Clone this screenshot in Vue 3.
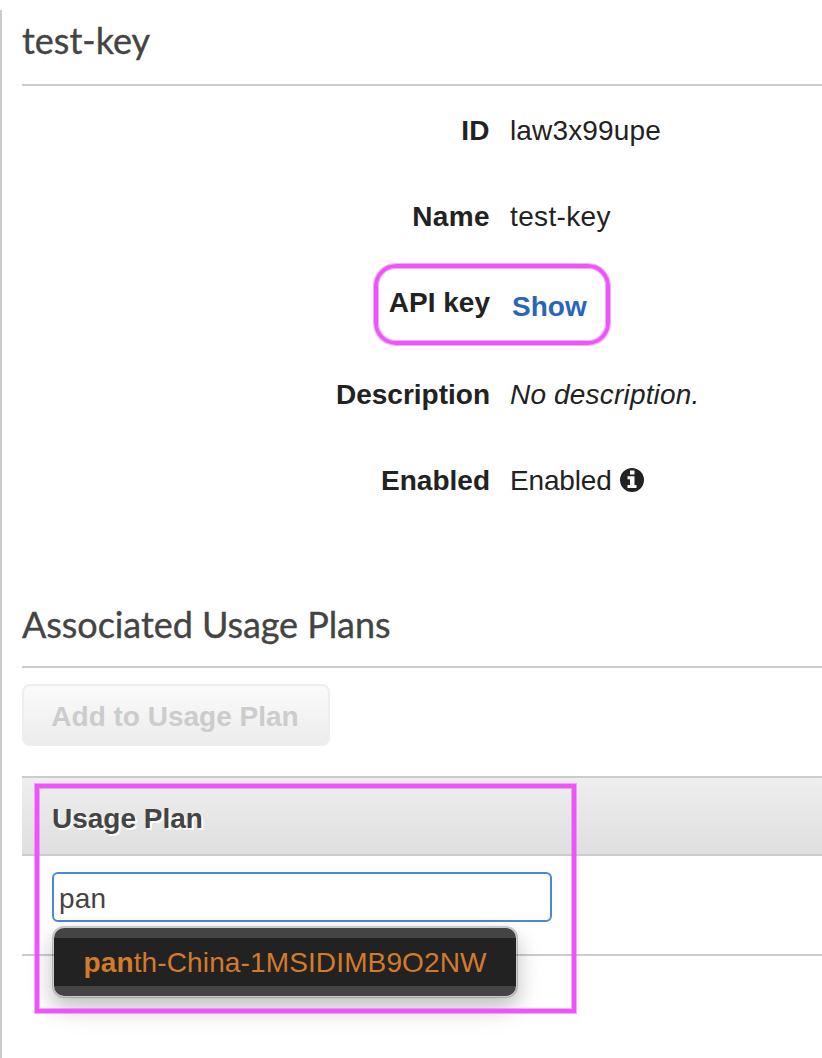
<script setup>
import { ref } from 'vue'

const details = [
  { label: 'ID', value: 'law3x99upe', kind: 'id' },
  { label: 'Name', value: 'test-key', kind: 'name' },
  { label: 'API key', value: 'Show', kind: 'secret' },
  { label: 'Description', value: 'No description.', kind: 'description' },
  { label: 'Enabled', value: 'Enabled', kind: 'enabled' },
]
const query = ref('pan')
</script>

<template>
  <main class="panel">
    <h1 class="title">test-key</h1>

    <dl class="details">
      <div v-for="row in details" :key="row.kind" class="row" :class="row.kind">
        <dt><span>{{ row.label }}</span></dt>
        <dd>
          <a v-if="row.kind === 'secret'"><span>{{ row.value }}</span></a>
          <span v-else>{{ row.value }}</span>
          <svg v-if="row.kind === 'enabled'" class="info" viewBox="0 0 24 24" width="24" height="24">
            <circle cx="12" cy="12" r="12" fill="#222" />
            <path d="M10 2.500h4.500v4H10zM7.500 8.200h7V17H16.500v3h-9v-3h2.500v-5.800H7.500z" fill="#fff" />
          </svg>
        </dd>
        <div v-if="row.kind === 'secret'" class="mark rounded"></div>
      </div>
    </dl>

    <h2 class="title plans">Associated Usage Plans</h2>
    <button class="add" disabled><span>Add to Usage Plan</span></button>

    <section class="table">
      <div class="head"><span>Usage Plan</span></div>
      <div class="cell">
        <div class="combo">
          <input v-model="query" type="text" />
          <div class="menu">
            <div class="option"><span><b>pan</b>th-China-1MSIDIMB9O2NW</span></div>
          </div>
        </div>
      </div>
      <div class="mark square"></div>
    </section>
  </main>
</template>

<style>
body {
  background: #fff;
  overflow: hidden;
}
</style>

<style scoped>
* {
  box-sizing: border-box;
}
.panel {
  margin-top: 10px;
  height: 1048px;
  border-left: 2px solid #ccc;
  padding-left: 20px;
  font: 28px/40px "Liberation Sans", Arial, sans-serif;
  color: #222;
  overflow: hidden;
}
.title {
  margin: 0;
  height: 76px;
  padding-top: 8px;
  border-bottom: 2px solid #ccc;
  font: 400 36px/44px Lato, sans-serif;
  color: #444;
  -webkit-text-stroke: 0.35px #444;
}
.plans {
  height: 74px;
  letter-spacing: -0.07px;
}
.details {
  margin: 0;
  padding-top: 25px;
  height: 508px;
}
.row {
  position: relative;
  display: grid;
  grid-template-columns: 468px 1fr;
  column-gap: 20px;
  height: 86px;
}
.row.secret {
  height: 92px;
}
dt {
  text-align: right;
  font-weight: 700;
}
.id dt,
.name dt {
  letter-spacing: 0.4px;
}
dd {
  margin: 0;
  display: flex;
  align-items: flex-start;
}
.id dd {
  letter-spacing: 0.15px;
}
.name dd {
  letter-spacing: 0.35px;
}
.description dd {
  font-style: italic;
  letter-spacing: 0.18px;
}
.enabled dd {
  letter-spacing: -0.15px;
}
.secret dd {
  padding: 4px 0 0 2px;
}
a {
  color: #2a65b8;
  font-weight: 700;
}
.info {
  margin: 7px 0 0 8px;
}
.mark {
  position: absolute;
  border: 4px solid #ee55f8;
  box-shadow: 0 0 0 1px rgba(238, 85, 248, 0.5), inset 0 0 0 1px rgba(238, 85, 248, 0.5);
  pointer-events: none;
}
.rounded {
  left: 352px;
  top: -19px;
  width: 236px;
  height: 81px;
  border-radius: 22px;
}
.add {
  display: block;
  margin: 16px 0 30px;
  width: 308px;
  height: 62px;
  padding: 4px 2px 0 0;
  border: 2px solid #eee;
  border-radius: 8px;
  background: linear-gradient(#fbfbfb, #ececec);
  color: #ccc;
  font: 700 28px/40px "Liberation Sans", Arial, sans-serif;
}
.table {
  position: relative;
}
.head {
  height: 80px;
  padding: 21px 30px;
  border: solid #ccc;
  border-width: 2px 0;
  background: linear-gradient(#eee, #dfdfdf);
  color: #444;
  font-weight: 700;
  text-shadow: 2px 2px 0 #fff;
}
.cell {
  height: 100px;
  padding: 16px 30px;
  border-bottom: 2px solid #ccc;
}
.combo {
  position: relative;
  width: 500px;
}
input {
  display: block;
  width: 100%;
  height: 50px;
  padding: 4px 5px 0;
  border: 2px solid #4888d4;
  border-radius: 6px;
  outline: 0;
  background: #fff;
  color: #444;
  font: inherit;
  letter-spacing: 0.2px;
}
.menu {
  position: absolute;
  left: 0;
  top: 54px;
  width: 466px;
  padding: 10px 0;
  border: 2px solid rgba(0, 0, 0, 0.2);
  border-radius: 12px;
  background: #444;
  background-clip: padding-box;
  box-shadow: 0 10px 20px rgba(0, 0, 0, 0.2), 0 12px 36px rgba(0, 0, 0, 0.06);
}
.option {
  height: 48px;
  padding: 1px 0 0 29.5px;
  background: #222;
  color: #d27b2c;
  line-height: 48px;
  letter-spacing: 0.13px;
  white-space: nowrap;
}
.square {
  left: 13px;
  top: 8px;
  width: 541px;
  height: 229px;
}
</style>
